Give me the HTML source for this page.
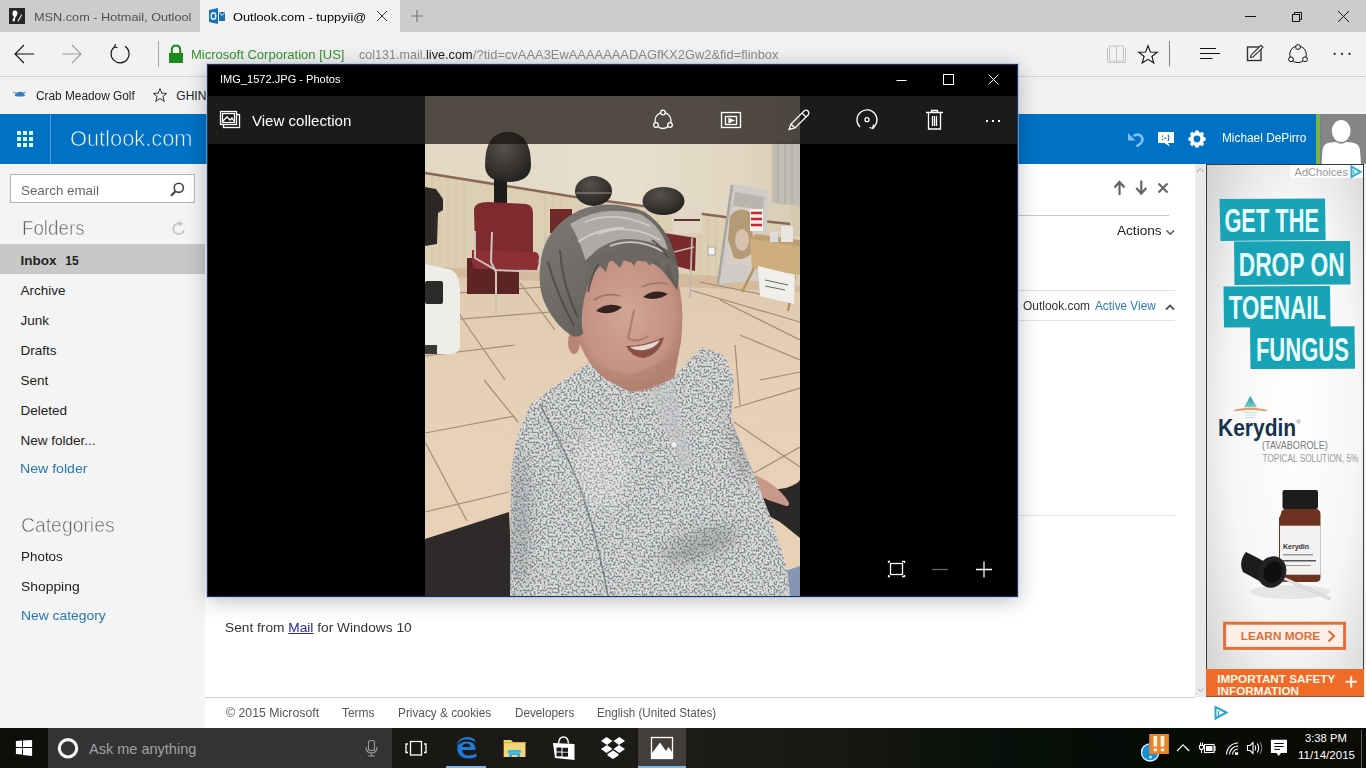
<!DOCTYPE html>
<html><head><meta charset="utf-8">
<style>
*{margin:0;padding:0;box-sizing:border-box}
html,body{width:1366px;height:768px;overflow:hidden;background:#f2f2f2;font-family:"Liberation Sans",sans-serif}
.a{position:absolute}
.t{position:absolute;white-space:nowrap;line-height:1}
svg{position:absolute;overflow:visible}
</style></head>
<body>
<div class="a" style="left:0px;top:0px;width:1366px;height:32px;background:#cccccc;"></div>
<div class="a" style="left:200px;top:0px;width:200px;height:32px;background:#f2f2f2;"></div>
<div class="t" id="t1" style="left:33.80px;top:11.77px;font-size:11.5px;color:#505050;font-weight:400;transform:scaleX(1.1044);transform-origin:0 0;">MSN.com - Hotmail, Outlool</div>
<div class="t" id="t2" style="left:233.00px;top:11.77px;font-size:11.5px;color:#000;font-weight:400;transform:scaleX(1.1136);transform-origin:0 0;">Outlook.com - tuppyii@</div>
<svg style="left:0;top:0" width="1366" height="768" viewBox="0 0 1366 768">
 <defs><linearGradient id="fade" x1="0" x2="1"><stop offset="0" stop-color="#cccccc" stop-opacity="0"/><stop offset="1" stop-color="#cccccc"/></linearGradient></defs>
 
 <!-- msn icon -->
 <rect x="9" y="8" width="16" height="16" fill="#262626"/>
 <path d="M14,10.5 Q17.5,10 17.5,13.5 Q17,16 15.5,17 L14.5,21.5 Q12.5,22 12.5,20 L14,17 Q12,15 12.5,12.5 Q13,10.7 14,10.5 Z" fill="#fff"/>
 <path d="M17.5,21 L21.5,14 L22,15 L18.5,21.5 Z" fill="#fff"/>
 <!-- outlook icon -->
 <path d="M209,10 L218,8 L218,24 L209,22 Z" fill="#1a6fb5"/>
 <ellipse cx="213.5" cy="16" rx="2.3" ry="3.2" fill="none" stroke="#e8f4ff" stroke-width="1.4"/>
 <rect x="219" y="12" width="6" height="9" fill="#1a6fb5"/>
 <path d="M219.5,12.5 L222,15.5 L225,12.5" stroke="#e8f4ff" stroke-width="1" fill="none"/>
 <!-- close tab -->
 <path d="M377,11 L387,21 M387,11 L377,21" stroke="#333" stroke-width="1"/>
 <!-- new tab plus -->
 <path d="M411,16 L423,16 M417,10 L417,22" stroke="#777" stroke-width="1.2"/>
 <!-- window controls -->
 <g stroke="#111" stroke-width="1" fill="none">
  <path d="M1245,16.5 L1256,16.5"/>
  <rect x="1292.5" y="14.5" width="7" height="7"/>
  <path d="M1294.5,14.5 L1294.5,12.5 L1301.5,12.5 L1301.5,19.5 L1299.5,19.5"/>
  <path d="M1338,11 L1349,22 M1349,11 L1338,22"/>
 </g>
</svg>
<div class="a" style="left:0px;top:32px;width:1366px;height:44px;background:#f2f2f2;"></div>
<div class="a" style="left:0px;top:76px;width:1366px;height:1px;background:#d2d2d2;"></div>
<div class="t" id="t3" style="left:191.00px;top:48.40px;font-size:13px;color:#359235;font-weight:400;transform:scaleX(1.0021);transform-origin:0 0;">Microsoft Corporation [US]</div>
<div class="t" id="t4" style="left:359.20px;top:47.60px;font-size:13px;color:#8c8c8c;font-weight:400;transform:scaleX(0.9658);transform-origin:0 0;">col131.mail.</div>
<div class="t" id="t5" style="left:426.40px;top:47.60px;font-size:13px;color:#1a1a1a;font-weight:400;transform:scaleX(0.9751);transform-origin:0 0;">live.com</div>
<div class="t" id="t6" style="left:473.00px;top:47.60px;font-size:13px;color:#8c8c8c;font-weight:400;transform:scaleX(0.9924);transform-origin:0 0;">/?tid=cvAAA3EwAAAAAAADAGfKX2Gw2&amp;fid=flinbox</div>
<svg style="left:0;top:0" width="1366" height="768" viewBox="0 0 1366 768">
 <g fill="none" stroke-width="1.1">
  <path d="M15,54 L34,54 M24,45 L15,54 L24,63" stroke="#111"/>
  <path d="M62,54 L81,54 M72,45 L81,54 L72,63" stroke="#9a9a9a"/>
  <path d="M114.5,46.8 A9,9 0 1 0 125,46.3" stroke="#111"/>
  <path d="M115.5,44 L114.5,46.8 L117.5,47.8" stroke="#111"/>
  <path d="M158.5,41 L158.5,67" stroke="#a8a8a8"/>
  <path d="M1169.5,41 L1169.5,66.5" stroke="#888"/>
 </g>
 <!-- lock -->
 <rect x="169" y="53" width="14" height="10" fill="#1d8a1d"/>
 <path d="M171.8,53 L171.8,50 Q171.8,45.5 176,45.5 Q180.2,45.5 180.2,50 L180.2,53" stroke="#1d8a1d" stroke-width="2" fill="none"/>
 <!-- book -->
 <g stroke="#c6c6c6" stroke-width="1" fill="none">
  <path d="M1107.5,48 L1107.5,62.5 L1125.5,62.5 L1125.5,48 M1109.5,46 L1109.5,61 L1116.5,61 L1116.5,46 Z M1116.5,46 L1123.5,46 L1123.5,61 L1116.5,61 M1116.5,46 L1116.5,62.5"/>
 </g>
 <!-- star -->
 <path d="M1148,45.8 L1150.4,52 L1157.2,52.3 L1151.9,56.5 L1153.8,63 L1148,59.3 L1142.2,63 L1144.1,56.5 L1138.8,52.3 L1145.6,52 Z" fill="none" stroke="#111" stroke-width="1.1" stroke-linejoin="miter"/>
 <!-- hub -->
 <path d="M1200,48.5 L1216,48.5 M1200,53.5 L1220,53.5 M1200,58.5 L1212.5,58.5" stroke="#111" stroke-width="1"/>
 <!-- note -->
 <rect x="1247.5" y="47" width="13.5" height="13.5" fill="none" stroke="#333" stroke-width="1.4"/>
 <path d="M1250.5,57.5 L1251,55 L1261,45.3 L1263,47.3 L1253,57 Z" fill="#f2f2f2" stroke="#333" stroke-width="1.1"/>
 <!-- share -->
 <g stroke="#111" stroke-width="1" fill="#f2f2f2">
  <circle cx="1298" cy="54.3" r="8.3" fill="none"/>
  <circle cx="1298" cy="47" r="2.4"/>
  <circle cx="1291" cy="59.3" r="2.4"/>
  <circle cx="1305" cy="59.3" r="2.4"/>
 </g>
 <g fill="#111">
  <circle cx="1334.6" cy="53.8" r="1.1"/><circle cx="1342" cy="53.8" r="1.1"/><circle cx="1349.5" cy="53.8" r="1.1"/>
 </g>
 <!-- crab icon & star fav -->
 <path d="M15,94 Q19,90 24,93 L25,96 Q20,97 15,96 Z" fill="#3a7ab8"/>
 <path d="M13,92 L16,93 M26,92 L23,93" stroke="#5a9ad8" stroke-width="1"/>
 <path d="M160,88.5 L161.8,93.2 L166.8,93.4 L162.9,96.5 L164.3,101.4 L160,98.6 L155.7,101.4 L157.1,96.5 L153.2,93.4 L158.2,93.2 Z" fill="none" stroke="#333" stroke-width="1"/>
</svg>
<div class="t" id="t7" style="left:36.20px;top:89.64px;font-size:12px;color:#222;font-weight:400;transform:scaleX(0.9875);transform-origin:0 0;">Crab Meadow Golf</div>
<div class="t" id="t8" style="left:176.30px;top:89.64px;font-size:12px;color:#222;font-weight:400;transform:scaleX(1.0000);transform-origin:0 0;">GHIN</div>
<div class="a" style="left:0px;top:114px;width:1366px;height:50px;background:#0072c6;"></div>
<div class="a" style="left:50px;top:114px;width:1px;height:50px;background:#4b9ad8;"></div>
<div class="a" style="left:0px;top:164px;width:205px;height:564px;background:#f4f4f4;"></div>
<div class="a" style="left:205px;top:164px;width:990px;height:533px;background:#ffffff;"></div>
<div class="a" style="left:205px;top:697px;width:1161px;height:31px;background:#ffffff;"></div>
<div class="a" style="left:205px;top:697px;width:990px;height:1px;background:#d0d0d0;"></div>
<div class="t" id="t9" style="left:69.50px;top:128.18px;font-size:22px;color:#ffffff;font-weight:400;transform:scaleX(0.9919);transform-origin:0 0;-webkit-text-stroke:0.7px #0072c6;">Outlook.com</div>
<div class="t" id="t10" style="left:1221.50px;top:131.74px;font-size:12px;color:#ffffff;font-weight:400;transform:scaleX(0.9876);transform-origin:0 0;">Michael DePirro</div>
<div class="a" style="left:10px;top:174px;width:185px;height:29px;background:#ffffff;border:1px solid #b4b4b4;"></div>
<div class="t" id="t11" style="left:21.20px;top:183.57px;font-size:13.5px;color:#666666;font-weight:400;transform:scaleX(0.9899);transform-origin:0 0;">Search email</div>
<div class="t" id="t12" style="left:21.50px;top:217.23px;font-size:21px;color:#5e5e5e;font-weight:400;transform:scaleX(0.8925);transform-origin:0 0;-webkit-text-stroke:0.6px #f4f4f4;">Folders</div>
<div class="a" style="left:0px;top:244px;width:205px;height:30px;background:#c8c8c8;"></div>
<div class="t" id="t13" style="left:20.40px;top:253.57px;font-size:13.5px;color:#222;font-weight:700;transform:scaleX(1.0000);transform-origin:0 0;">Inbox</div>
<div class="t" id="t14" style="left:65.30px;top:254.84px;font-size:12px;color:#222;font-weight:700;">15</div>
<div class="t" id="t15" style="left:20.40px;top:283.57px;font-size:13.5px;color:#222;font-weight:400;">Archive</div>
<div class="t" id="t16" style="left:20.40px;top:313.57px;font-size:13.5px;color:#222;font-weight:400;">Junk</div>
<div class="t" id="t17" style="left:20.40px;top:343.57px;font-size:13.5px;color:#222;font-weight:400;">Drafts</div>
<div class="t" id="t18" style="left:20.40px;top:373.57px;font-size:13.5px;color:#222;font-weight:400;">Sent</div>
<div class="t" id="t19" style="left:20.40px;top:403.57px;font-size:13.5px;color:#222;font-weight:400;">Deleted</div>
<div class="t" id="t20" style="left:20.40px;top:433.57px;font-size:13.5px;color:#222;font-weight:400;">New folder...</div>
<div class="t" id="t21" style="left:20.40px;top:462.07px;font-size:13.5px;color:#2878b0;font-weight:400;transform:scaleX(1.0460);transform-origin:0 0;">New folder</div>
<div class="t" id="t22" style="left:21.40px;top:515.07px;font-size:20px;color:#5e5e5e;font-weight:400;transform:scaleX(0.9678);transform-origin:0 0;-webkit-text-stroke:0.6px #f4f4f4;">Categories</div>
<div class="t" id="t23" style="left:20.60px;top:550.27px;font-size:13.5px;color:#222;font-weight:400;transform:scaleX(0.9945);transform-origin:0 0;">Photos</div>
<div class="t" id="t24" style="left:20.60px;top:579.87px;font-size:13.5px;color:#222;font-weight:400;transform:scaleX(1.0269);transform-origin:0 0;">Shopping</div>
<div class="t" id="t25" style="left:20.60px;top:609.17px;font-size:13.5px;color:#2878b0;font-weight:400;transform:scaleX(1.0261);transform-origin:0 0;">New category</div>
<div class="a" style="left:1018px;top:215px;width:151px;height:1px;background:#c8c8c8;"></div>
<div class="t" id="t26" style="left:1116.80px;top:224.27px;font-size:13.5px;color:#222;font-weight:400;transform:scaleX(1.0072);transform-origin:0 0;">Actions</div>
<div class="a" style="left:1018px;top:290px;width:157px;height:1px;background:#e0e0e0;"></div>
<div class="t" id="t27" style="left:1023.00px;top:300.12px;font-size:12.5px;color:#333;font-weight:400;transform:scaleX(0.9548);transform-origin:0 0;">Outlook.com</div>
<div class="t" id="t28" style="left:1094.80px;top:300.12px;font-size:12.5px;color:#2a7ab0;font-weight:400;transform:scaleX(0.9427);transform-origin:0 0;">Active View</div>
<div class="a" style="left:1018px;top:320px;width:157px;height:1px;background:#e4e4e4;"></div>
<div class="a" style="left:1018px;top:515px;width:157px;height:1px;background:#e0e0e0;"></div>
<div class="t" id="t29" style="left:225.10px;top:620.77px;font-size:13.5px;color:#333;font-weight:400;transform:scaleX(1.0155);transform-origin:0 0;">Sent from <span style="color:#2a2a8c;text-decoration:underline">Mail</span> for Windows 10</div>
<div class="t" id="t30" style="left:225.50px;top:707.12px;font-size:12.5px;color:#555;font-weight:400;transform:scaleX(0.9834);transform-origin:0 0;">&copy; 2015 Microsoft</div>
<div class="t" id="t31" style="left:341.90px;top:707.12px;font-size:12.5px;color:#555;font-weight:400;transform:scaleX(0.9550);transform-origin:0 0;">Terms</div>
<div class="t" id="t32" style="left:398.00px;top:707.12px;font-size:12.5px;color:#555;font-weight:400;transform:scaleX(0.9447);transform-origin:0 0;">Privacy &amp; cookies</div>
<div class="t" id="t33" style="left:514.90px;top:707.12px;font-size:12.5px;color:#555;font-weight:400;transform:scaleX(0.9378);transform-origin:0 0;">Developers</div>
<div class="t" id="t34" style="left:597.40px;top:707.12px;font-size:12.5px;color:#555;font-weight:400;transform:scaleX(0.9316);transform-origin:0 0;">English (United States)</div>
<svg style="left:0;top:0" width="1366" height="768" viewBox="0 0 1366 768">
 <g fill="#d6fbff">
  <rect x="17" y="131" width="4" height="4"/><rect x="23" y="131" width="4" height="4"/><rect x="29" y="131" width="4" height="4"/>
  <rect x="17" y="137" width="4" height="4"/><rect x="23" y="137" width="4" height="4"/><rect x="29" y="137" width="4" height="4"/>
  <rect x="17" y="143" width="4" height="4"/><rect x="23" y="143" width="4" height="4"/><rect x="29" y="143" width="4" height="4"/>
 </g>
 <!-- undo -->
 <path d="M1133.5,136 Q1138,133 1141.5,136.5 Q1144,140 1140.5,143.5 L1136.5,146.5" stroke="#80c0f0" stroke-width="2.6" fill="none"/>
 <path d="M1128,133 L1128,140.5 L1135.5,140.5 Z" fill="#80c0f0"/>
 <!-- feedback -->
 <path d="M1158,132 L1174,132 L1174,143 L1168,143 L1170,146.8 L1164.5,143 L1158,143 Z" fill="#fff"/>
 <g fill="#0b4f8a"><rect x="1162" y="135.5" width="1.2" height="1.2"/><rect x="1162" y="139" width="1.2" height="1.2"/><rect x="1164.2" y="137.6" width="2" height="1"/></g>
 <path d="M1168,134.5 Q1170,137.5 1168,141" stroke="#0b4f8a" stroke-width="1" fill="none"/>
 <!-- gear -->
 <g transform="translate(1197,139)">
  <circle r="5.2" fill="none" stroke="#fff" stroke-width="3.6"/>
  <g fill="#fff">
   <rect x="-1.8" y="-8.6" width="3.6" height="4" rx="0.6"/>
   <rect x="-1.8" y="-8.6" width="3.6" height="4" rx="0.6" transform="rotate(45)"/>
   <rect x="-1.8" y="-8.6" width="3.6" height="4" rx="0.6" transform="rotate(90)"/>
   <rect x="-1.8" y="-8.6" width="3.6" height="4" rx="0.6" transform="rotate(135)"/>
   <rect x="-1.8" y="-8.6" width="3.6" height="4" rx="0.6" transform="rotate(180)"/>
   <rect x="-1.8" y="-8.6" width="3.6" height="4" rx="0.6" transform="rotate(225)"/>
   <rect x="-1.8" y="-8.6" width="3.6" height="4" rx="0.6" transform="rotate(270)"/>
   <rect x="-1.8" y="-8.6" width="3.6" height="4" rx="0.6" transform="rotate(315)"/>
  </g>
 </g>
 <!-- avatar -->
 <rect x="1316" y="114" width="4.5" height="50" fill="#7cb342"/>
 <rect x="1320.5" y="114" width="45.5" height="50" fill="#858585"/>
 <ellipse cx="1341.2" cy="131" rx="9.4" ry="11" fill="#fff"/>
 <path d="M1321.6,164 L1322.5,150 Q1323.5,143 1330,142.5 L1336,142 Q1341,145.5 1346,142 L1352,142.5 Q1359,143 1360,150 L1361,164 Z" fill="#fff"/>
 <!-- search magnifier -->
 <circle cx="178.8" cy="187.8" r="4.6" fill="none" stroke="#444" stroke-width="1.6"/>
 <path d="M175.5,191.2 L171,195.8" stroke="#444" stroke-width="2.2"/>
 <!-- refresh folders -->
 <path d="M179,223.5 A5.3,5.3 0 1 0 183.8,230.2" stroke="#c6c6c6" stroke-width="1.9" fill="none"/>
 <path d="M178.8,220.8 L183.2,223.8 L178.8,226.6 Z" fill="#c6c6c6"/>
 <!-- reading pane arrows -->
 <g stroke="#666" stroke-width="2.2" fill="none">
  <path d="M1119.5,195 L1119.5,182.5 M1114.5,187.5 L1119.5,182 L1124.5,187.5"/>
  <path d="M1141.3,180.5 L1141.3,193 M1136.3,188 L1141.3,193.5 L1146.3,188"/>
  <path d="M1158.5,183.5 L1167.5,192.5 M1167.5,183.5 L1158.5,192.5"/>
 </g>
 <path d="M1166.5,230.5 L1170.3,234.3 L1174,230.5" stroke="#555" stroke-width="1.5" fill="none"/>
 <path d="M1166,309.5 L1170,305.5 L1174,309.5" stroke="#555" stroke-width="1.8" fill="none"/>
 <!-- scrollbar -->
 <rect x="1195" y="164" width="11" height="533" fill="#e9e9e9"/>
 <path d="M1197,172 L1200.3,168.7 L1203.6,172" stroke="#999" stroke-width="1" fill="none"/>
 <path d="M1197.5,688.5 L1200.5,691.5 L1203.5,688.5" stroke="#aaa" stroke-width="1" fill="none"/>
 <!-- ad feedback icon footer -->
 <path d="M1215.5,707 L1226.5,712.5 L1215.5,718.5 Z" fill="none" stroke="#2aa6c8" stroke-width="2"/>
 <path d="M1218.5,711 L1218.5,716" stroke="#2aa6c8" stroke-width="1.4"/>
</svg>
<svg style="left:0;top:0" width="1366" height="768" viewBox="0 0 1366 768">
 <defs>
  <radialGradient id="adbg" cx="0.55" cy="0.5" r="0.75" fx="0.55" fy="0.45">
   <stop offset="0" stop-color="#ffffff"/><stop offset="0.55" stop-color="#f6f6f6"/><stop offset="1" stop-color="#cfcfcf"/>
  </radialGradient>
  <linearGradient id="drop" x1="0" y1="0" x2="0" y2="1"><stop offset="0" stop-color="#2e9bb0"/><stop offset="1" stop-color="#7cc8c8"/></linearGradient>
 </defs>
 <rect x="1206" y="164" width="160" height="533" fill="#f2f2f2"/>
 <rect x="1206.5" y="164.5" width="157" height="532" fill="url(#adbg)" stroke="#3a3a3a" stroke-width="1"/>
 <!-- adchoices -->
 <rect x="1290" y="165" width="73" height="13" fill="#ffffff" opacity="0.85"/>
 <text x="1294.5" y="175.6" font-family="Liberation Sans" font-size="10.7" fill="#9a9a9a" textLength="53.5" lengthAdjust="spacingAndGlyphs">AdChoices</text>
 <path d="M1351.5,166.5 L1360.5,171.8 L1351.5,177 Z" fill="none" stroke="#2ab0c8" stroke-width="2"/>
 <path d="M1353.8,170 L1353.8,174" stroke="#2ab0c8" stroke-width="1.2"/>
 <!-- teal banners -->
 <g fill="#18a3b6">
  <polygon points="1219.5,199 1325,198.5 1325.6,240 1220.5,241"/>
  <polygon points="1234,241.5 1350,241 1350.5,284.5 1234.5,285"/>
  <polygon points="1223.5,286.5 1330,286 1330.5,327 1224,327.5"/>
  <polygon points="1250,327 1354.5,326.3 1355,368.7 1250.5,369"/>
 </g>
 <g font-family="Liberation Sans" font-weight="700" font-size="33" fill="#eaffff" lengthAdjust="spacingAndGlyphs">
  <text x="1224.4" y="231.7" textLength="94.6" lengthAdjust="spacingAndGlyphs">GET THE</text>
  <text x="1238.7" y="276.1" textLength="106" lengthAdjust="spacingAndGlyphs">DROP ON</text>
  <text x="1228.7" y="319" textLength="97.3" lengthAdjust="spacingAndGlyphs">TOENAIL</text>
  <text x="1255.9" y="360.7" textLength="93.1" lengthAdjust="spacingAndGlyphs">FUNGUS</text>
 </g>
 <!-- kerydin logo -->
 <polygon points="1250.3,396 1244,407.3 1257,407.3" fill="url(#drop)"/>
 <path d="M1234,410.5 Q1250.5,406 1267,410.5 Q1250.5,408.5 1234,410.5 Z" fill="#e29a66" stroke="#e29a66" stroke-width="1"/>
 <g stroke="#c9dfe6" stroke-width="1.2"><path d="M1243.5,412.5 L1257.5,412.5 M1244.5,415 L1256.5,415 M1246,417.5 L1255,417.5"/></g>
 <text x="1218" y="436" font-family="Liberation Sans" font-weight="700" font-size="24" fill="#17324d" textLength="78.2" lengthAdjust="spacingAndGlyphs">Kerydin</text>
 <circle cx="1298.5" cy="421.5" r="1.5" fill="none" stroke="#555" stroke-width="0.6"/>
 <text x="1262" y="448.8" font-family="Liberation Sans" font-size="10.5" fill="#7a7a7a" textLength="65.8" lengthAdjust="spacingAndGlyphs">(TAVABOROLE)</text>
 <text x="1262.5" y="462.3" font-family="Liberation Sans" font-size="10.5" fill="#9a9a9a" textLength="95.8" lengthAdjust="spacingAndGlyphs">TOPICAL SOLUTION, 5%</text>
 <!-- bottle -->
 <ellipse cx="1290" cy="592" rx="40" ry="7" fill="#d8d8d8" opacity="0.6"/>
 <path d="M1281,514 Q1281,508.5 1288,508.5 L1313,508.5 Q1320.5,508.5 1320.5,514 L1320.5,578 Q1320.5,582 1315,582 L1286,582 Q1279,582 1279,578 L1279,518 Z" fill="#6e3220"/>
 <rect x="1280" y="525.7" width="40.5" height="49" fill="#f4f2f0"/>
 <text x="1283" y="549" font-family="Liberation Sans" font-weight="700" font-size="7" fill="#333">Kerydin</text>
 <rect x="1283" y="554" width="30" height="1.5" fill="#999"/>
 <rect x="1283" y="560" width="33" height="1.5" fill="#555"/>
 <rect x="1283" y="565" width="28" height="1" fill="#999"/>
 <rect x="1282.5" y="490" width="35.5" height="19" rx="2" fill="#1c1c1c"/>
 <!-- dropper -->
 <path d="M1280,576.5 L1329,598.5" stroke="#c9c9c9" stroke-width="3" stroke-linecap="round"/>
 <path d="M1280,576.5 L1329,598.5" stroke="#f4f4f4" stroke-width="1"/>
 <path d="M1246,552 L1256,557 L1276,568 L1270,587 L1254,578 L1243,572 Q1238,562 1246,552 Z" fill="#1c1c1c"/>
 <ellipse cx="1272" cy="572" rx="14" ry="16" fill="#222" transform="rotate(25 1272 572)"/>
 <ellipse cx="1273" cy="572" rx="9" ry="11" fill="#0f0f0f" transform="rotate(25 1273 572)"/>
 <!-- learn more -->
 <rect x="1224.6" y="623.2" width="120" height="25.2" fill="#fcefe7" stroke="#e2703c" stroke-width="3"/>
 <text x="1240.7" y="640.2" font-family="Liberation Sans" font-weight="700" font-size="11" fill="#d8703e" textLength="79.5" lengthAdjust="spacingAndGlyphs">LEARN MORE</text>
 <path d="M1328.5,631 L1334,636 L1328.5,641.5" stroke="#d8703e" stroke-width="2" fill="none"/>
 <!-- safety bar -->
 <rect x="1206" y="669" width="158" height="27.5" fill="#f06a28"/>
 <g font-family="Liberation Sans" font-weight="700" font-size="11.3" fill="#fff8ea">
  <text x="1217.3" y="682.7" textLength="118" lengthAdjust="spacingAndGlyphs">IMPORTANT SAFETY</text>
  <text x="1217.3" y="694.6" textLength="81.7" lengthAdjust="spacingAndGlyphs">INFORMATION</text>
 </g>
 <path d="M1345.5,681.8 L1357,681.8 M1351.2,676.2 L1351.2,687.4" stroke="#fff8ea" stroke-width="2"/>
</svg>
<div class="a" style="left:207px;top:64px;width:811px;height:533px;background:#000;border:1px solid #1f3360;box-shadow:0 0 0 1px rgba(150,190,235,0.55),0 3px 20px rgba(0,0,0,0.27);"></div>
<div class="t" id="t35" style="left:220.40px;top:74.29px;font-size:11px;color:#fff;font-weight:400;transform:scaleX(1.0055);transform-origin:0 0;">IMG_1572.JPG - Photos</div>
<svg style="left:0;top:0" width="1366" height="768" viewBox="0 0 1366 768">
 <g stroke="#fff" stroke-width="1" fill="none">
  <line x1="896.5" y1="80.5" x2="906.5" y2="80.5"/>
  <rect x="943.5" y="74.5" width="10" height="10"/>
  <path d="M988.5 74.5 L998.5 84.5 M998.5 74.5 L988.5 84.5"/>
 </g>
</svg>
<div class="a" style="left:208px;top:96px;width:809px;height:48px;background:#1b1b1b;"></div>
<svg style="left:0;top:0" width="1366" height="768" viewBox="0 0 1366 768">
<defs>
 <clipPath id="pc"><rect x="425" y="96" width="375" height="500"/></clipPath>
 <filter id="knit" x="0" y="0" width="100%" height="100%">
  <feTurbulence type="fractalNoise" baseFrequency="0.5" numOctaves="2" seed="7" result="n"/>
  <feColorMatrix in="n" type="matrix" values="0 0 0 0 0.25  0 0 0 0 0.27  0 0 0 0 0.28  -7 0 0 0 3.85" result="dots"/>
  <feComposite in="dots" in2="SourceGraphic" operator="in" result="d2"/>
  <feMerge><feMergeNode in="SourceGraphic"/><feMergeNode in="d2"/></feMerge>
 </filter>
 <filter id="soft"><feGaussianBlur stdDeviation="0.7"/></filter>
 <filter id="soft2" x="-50%" y="-50%" width="200%" height="200%"><feGaussianBlur stdDeviation="7"/></filter>
 <linearGradient id="wall" x1="0" y1="0" x2="1" y2="0">
  <stop offset="0" stop-color="#e3d8c4"/><stop offset="0.55" stop-color="#e7dfcc"/><stop offset="0.85" stop-color="#e0d6c1"/><stop offset="1" stop-color="#d6cbb2"/>
 </linearGradient>
 <linearGradient id="floor" x1="0" y1="0" x2="0" y2="1">
  <stop offset="0" stop-color="#dfcab0"/><stop offset="0.4" stop-color="#e6d0b7"/><stop offset="1" stop-color="#e9d1b6"/>
 </linearGradient>
 <radialGradient id="face" cx="0.5" cy="0.45" r="0.6">
  <stop offset="0" stop-color="#d2a594"/><stop offset="0.7" stop-color="#c39282"/><stop offset="1" stop-color="#a97565"/>
 </radialGradient>
 <radialGradient id="dome" cx="0.4" cy="0.3" r="0.7">
  <stop offset="0" stop-color="#56524e"/><stop offset="1" stop-color="#262422"/>
 </radialGradient>
 <linearGradient id="hairg" x1="0" y1="0" x2="1" y2="1">
  <stop offset="0" stop-color="#7e7b77"/><stop offset="0.5" stop-color="#6c6965"/><stop offset="1" stop-color="#54514d"/>
 </linearGradient>
</defs>
<g clip-path="url(#pc)">
 <rect x="425" y="96" width="375" height="500" fill="url(#wall)"/>
 <!-- wainscot -->
 <polygon points="425,174 572,197 725,218 800,226 800,286 708,275 600,271 425,267" fill="#ddcfb3"/>
 <g stroke="#cbbb9c" stroke-width="0.8" opacity="0.7">
  <path d="M432,176 L432,266 M440,177 L440,266 M448,178 L448,266 M456,180 L456,266 M464,181 L464,267 M545,194 L545,269 M553,195 L553,270 M561,196 L561,270 M700,214 L700,274 M708,215 L708,275 M716,216 L716,275"/>
 </g>
 <polyline points="425,173 572,196.5 725,217 800,225" stroke="#8a6858" stroke-width="2.6" fill="none"/>
 <!-- floor -->
 <polygon points="425,267 600,271 708,275 800,286 800,596 425,596" fill="url(#floor)"/>
 <polygon points="425,267 600,271 708,275 800,286 800,292 425,276" fill="#cdb493" opacity="0.7"/>
 <g stroke="#8f7d68" stroke-width="1.2" fill="none" opacity="0.8">
  <path d="M425,295 L560,286 M425,322 L575,310 M425,356 L515,345 M425,433 L515,416 M425,512 L509,492"/>
  <path d="M440,284 L470,330 L505,380 M484,380 L518,422 M425,442 L467,521 M520,283 L555,330"/>
  <path d="M700,282 L790,300 M690,290 L800,322 M734,408 L800,388 M734,422 L800,467 M754,473 L800,447 M720,300 L800,340 M740,335 L800,360"/>
  <path d="M760,380 L800,372 M740,405 L735,345"/>
 </g>
 <!-- blinds top right -->
 <polygon points="772,144 800,140 800,206 772,203" fill="#c2bdb2"/>
 <g stroke="#a8a397" stroke-width="0.8"><path d="M778,143 L778,203 M785,142 L785,204 M792,141 L792,205"/></g>
 <rect x="790" y="206" width="10" height="30" fill="#d5cab0"/>
 <!-- left white object -->
 <path d="M425,264 L452,270 Q460,276 460,290 L460,346 Q459,354 450,354 L425,354 Z" fill="#eeedea"/>
 <rect x="425" y="281" width="18" height="23" rx="2" fill="#2c2a28"/>
 <rect x="425" y="345" width="12" height="9" fill="#3a3836"/>
 <path d="M425,187 L436,189 L443,199 L443,210 L438,213 L437,244 L425,246 Z" fill="#2b2826"/>
 <!-- hair dryer 1 -->
 <rect x="494" y="178" width="13" height="25" fill="#1f1d1c"/>
 <path d="M485,165 Q485,132 508,132 Q531,132 531,165 Q531,182 508,182 Q485,182 485,165 Z" fill="url(#dome)"/>
 <!-- red chair -->
 <rect x="467" y="258" width="52" height="36" fill="#5c2422"/>
 <path d="M474,209 Q475,202 488,202 L526,204 Q533,205 533,213 L533,255 L475,255 Z" fill="#7e2a2f"/>
 <path d="M472,250 L536,252 Q540,254 539,262 L537,270 L476,269 Q471,266 472,258 Z" fill="#8c3035"/>
 <g stroke="#cbc5be" stroke-width="2" fill="none">
  <path d="M475,231 L475,258 L496,270 L540,272"/>
  <path d="M492,232 L491,262 L496,272 L496,314"/>
  <path d="M541,266 L544,300 M539,262 L548,236"/>
 </g>
 <!-- chair 2 & dryer 2 -->
 <rect x="550" y="209" width="22" height="24" fill="#6d2a29"/>
 <ellipse cx="593.5" cy="191" rx="18.5" ry="15" fill="url(#dome)"/>
 <path d="M576,193 L611,193" stroke="#9a9590" stroke-width="1"/>
 <!-- dryer 3 + basket + chair -->
 <polygon points="671,207 702,206 701,233 673,234" fill="#e2d6c4"/>
 <path d="M674,220 L700,220" stroke="#5a3a2a" stroke-width="2"/>
 <ellipse cx="663.5" cy="201" rx="21" ry="14" fill="url(#dome)"/>
 <path d="M658,232 L696,238 L695,271 L660,262 Z" fill="#7a2a2b"/>
 <path d="M674,252 L694,247 M692,238 L690,298 M670,262 L680,306" stroke="#c0b8b0" stroke-width="1.8" fill="none"/>
 
 <!-- poster stand -->
 <polygon points="732,184 768,190 766,280 718,284" fill="#cfcbc7"/>
 <polygon points="735,192 764,197 763,210 733,206" fill="#b9b4ae"/>
 <polygon points="733,206 763,210 761,266 726,264" fill="#d8cdc4"/>
 <path d="M730,216 Q740,204 752,214 L753,252 Q744,262 734,258 L728,240 Z" fill="#b59a78"/>
 <ellipse cx="742" cy="240" rx="7" ry="11" fill="#d9bfae"/>
 <rect x="750" y="209" width="13" height="22" fill="#f2f0ec"/>
 <path d="M751,213 L762,213 M751,219 L762,219 M751,225 L762,225" stroke="#c8262a" stroke-width="2.6"/>
 <path d="M718,284 L732,185" stroke="#a9a49e" stroke-width="2.5"/>
 <rect x="708" y="247" width="7" height="8" fill="#f4f2ee" stroke="#888" stroke-width="0.6"/>
 <!-- desk -->
 <polygon points="750,239 800,247 800,275 752,268" fill="#cfae7d"/>
 <polygon points="750,239 800,247 800,240 756,234" fill="#bfa070"/>
 <path d="M754,268 L742,292 M795,275 L788,311" stroke="#b7935e" stroke-width="2.5"/>
 <polygon points="758,266 795,275 794,304 760,296" fill="#f0efec"/>
 <path d="M765,280 L788,285 M765,286 L785,290" stroke="#666" stroke-width="1"/>
 <rect x="781" y="226" width="12" height="16" fill="#e8e6e2"/>
 <rect x="770" y="232" width="8" height="10" fill="#ddd"/>
 <!-- dark chair bottom-left -->
 <polygon points="425,539 509,512 513,596 425,596" fill="#2d2a29"/>
 <!-- chair arm right -->
 <path d="M751,493 L786,488 Q798,484 800,480 L800,538 Q790,530 780,522 L752,507 Z" fill="#2a2928"/>
 <path d="M745,472 Q770,478 786,498 Q792,506 786,506 L768,500 L748,490 Z" fill="#c8988a"/>
 <polygon points="785,571 800,566 800,596 783,596" fill="#8596b4"/>
 <!-- neck -->
 <path d="M592,350 L596,366 Q614,386 631,393 Q656,389 674,380 L679,352 L679,335 L598,335 Z" fill="#b48272"/>
 <!-- sweater -->
 <clipPath id="swc"><path d="M510,596 L511,473 L516,440 L530,405 L552,388 L590,362 Q610,385 631,392 Q655,388 672,379 L702,347 L725,356 L734,379 L731,420 L754,474 L772,521 L787,568 L790,596 Z"/></clipPath>
 <path d="M510,596 L511,473 L516,440 L530,405 L552,388 L590,362 Q610,385 631,392 Q655,388 672,379 L702,347 L725,356 L734,379 L731,420 L754,474 L772,521 L787,568 L790,596 Z" fill="#dcdddd" filter="url(#knit)"/>
 <g clip-path="url(#swc)" filter="url(#soft2)">
  <ellipse cx="700" cy="545" rx="40" ry="14" fill="#6a6d70" opacity="0.35" transform="rotate(-20 700 545)"/>
  <ellipse cx="520" cy="520" rx="10" ry="70" fill="#6a6d70" opacity="0.3"/>
  <ellipse cx="745" cy="430" rx="14" ry="50" fill="#6a6d70" opacity="0.25"/>
  <ellipse cx="600" cy="470" rx="30" ry="40" fill="#ffffff" opacity="0.2"/>
 </g>
 <path d="M648,392 L672,380 L694,462 L682,470 Z" fill="#c4c6c7" opacity="0.5"/>
 <circle cx="674" cy="444.7" r="3.2" fill="#f2f1ea" stroke="#999" stroke-width="0.6"/>
 <path d="M540,405 Q560,440 578,482 Q596,530 608,596" stroke="#55595c" stroke-width="1.6" fill="none" opacity="0.55"/>
 <!-- face -->
 <path d="M574,266 Q596,250 630,253 Q664,254 677,278 Q684,302 682,330 Q681,356 671,371 Q656,388 640,390 Q614,388 598,373 Q582,356 577,334 Z" fill="url(#face)"/>
 <path d="M600,366 Q620,392 642,392 Q662,388 674,370 L676,350 Q650,372 630,374 Q610,372 600,366 Z" fill="#b38272" opacity="0.6"/>
 <!-- ear -->
 <ellipse cx="574" cy="342" rx="6" ry="12" fill="#b98676"/>
 <!-- hair -->
 <path d="M540,268 Q542,228 580,210 Q612,198 645,212 Q668,228 675,255 Q681,272 677,290 Q668,276 660,268 Q646,258 630,262 Q612,256 598,268 Q588,280 584,300 Q580,318 583,334 Q578,338 572,336 Q556,326 546,306 Q538,290 540,268 Z" fill="url(#hairg)"/>
 <path d="M570,224 Q600,204 640,214 Q662,226 668,250 Q642,236 618,240 Q596,246 586,262 Q580,240 570,224 Z" fill="#aeaaa5"/>
 <g stroke="#d4d1cc" stroke-width="1.8" fill="none" opacity="0.9">
  <path d="M585,222 Q615,210 650,226"/><path d="M598,234 Q628,222 660,240"/><path d="M578,242 Q598,228 624,228"/><path d="M610,246 Q636,236 664,252"/>
 </g>
 <g stroke="#4a4744" stroke-width="2" fill="none" opacity="0.8">
  <path d="M548,262 Q556,292 574,326"/><path d="M560,250 Q562,285 578,318"/><path d="M652,240 Q670,252 675,280"/><path d="M602,258 Q592,272 588,292"/>
 </g>
  <path d="M584,262 L592,276 L596,262 L606,272 L610,258 L620,268 L626,256 L634,266 L640,255 L650,266 L654,256 L664,272 L668,262 L676,286 L678,266 L660,252 L620,250 L590,256 Z" fill="#6c6965"/>
 <!-- eyes / brows -->
 <path d="M596,311 Q607,301 622,307 Q611,317 596,311 Z" fill="#33221f"/>
 <path d="M643,297 Q655,288 668,294 Q656,302 643,297 Z" fill="#33221f"/>
 <path d="M594,300 Q606,292 620,296" stroke="#9a7668" stroke-width="1.6" fill="none"/>
 <path d="M642,287 Q654,281 668,284" stroke="#9a7668" stroke-width="1.6" fill="none"/>
 <!-- nose shadow -->
 <path d="M634,310 Q630,330 628,338 Q636,344 648,336" stroke="#a06e5e" stroke-width="2" fill="none" opacity="0.7"/>
 <!-- mouth -->
 <path d="M626,346 Q645,346 664,337 Q660,354 644,358 Q632,358 626,346 Z" fill="#8a5048"/>
 <path d="M630,347 Q646,346 660,340 Q656,348 644,350 Q635,351 630,347 Z" fill="#e6d8cc"/>
</g>
<rect x="425" y="96" width="375" height="48" fill="#1a1512" opacity="0.73"/>
</svg>
<div class="t" id="t36" style="left:252.00px;top:113.10px;font-size:15px;color:#fff;font-weight:400;transform:scaleX(1.0035);transform-origin:0 0;">View collection</div>
<svg style="left:0;top:0" width="1366" height="768" viewBox="0 0 1366 768">
 <g stroke="#fff" stroke-width="1.3" fill="none">
  <rect x="223.5" y="114.5" width="16" height="13" fill="#1b1b1b"/>
  <rect x="220.5" y="111.5" width="16" height="13" fill="#1b1b1b"/>
  <rect x="222.5" y="113.5" width="12" height="9"/>
  <path d="M223,121 L227,117 L230,120 L232,118 L234,121"/>
  <!-- share -->
  <circle cx="663" cy="120.5" r="8"/>
  <circle cx="663" cy="112.5" r="2.3" fill="#4f4842"/>
  <circle cx="656" cy="125" r="2.3" fill="#4f4842"/>
  <circle cx="670" cy="125" r="2.3" fill="#4f4842"/>
  <!-- slideshow -->
  <rect x="721.5" y="112.5" width="19" height="15"/>
  <rect x="725.5" y="116.5" width="11" height="8"/>
  <path d="M729,118.5 L733.5,120.5 L729,122.5 Z" fill="#fff"/>
  <!-- pencil -->
  <path d="M789,129.5 L791,124 L804.5,110.5 Q806.5,109.5 808,111 Q809.5,112.5 808.5,114.5 L795,128 Z M791,124 L795,128 M802,113 L806,117"/>
  <!-- rotate -->
  <path d="M860,127 A10,10 0 1 1 872,128.5"/>
  <circle cx="867" cy="119.7" r="2"/>
  <path d="M869.5,127.5 L873,128.5 L873.5,124.5"/>
  <!-- trash -->
  <path d="M926,112.5 L943,112.5 M928.5,112.5 L928.5,129 L940.5,129 L940.5,112.5 M931.5,112.5 L931.5,110.5 L937.5,110.5 L937.5,112.5 M932.5,116 L932.5,126 M934.5,116 L934.5,126 M936.5,116 L936.5,126"/>
 </g>
 <g fill="#fff">
  <rect x="986" y="120" width="2" height="2"/><rect x="992" y="120" width="2" height="2"/><rect x="998" y="120" width="2" height="2"/>
 </g>
 <g stroke="#fff" stroke-width="1.3" fill="none">
  <!-- fit -->
  <rect x="890.5" y="563.5" width="12" height="11"/>
  <path d="M888.5,563 L888.5,561.5 L890,561.5 M902,561.5 L904.5,561.5 L904.5,563 M904.5,575 L904.5,576.5 L902,576.5 M890,576.5 L888.5,576.5 L888.5,575"/>
  <path d="M932,569.5 L948,569.5" stroke="#666"/>
  <path d="M976,569.5 L992,569.5 M984,561.5 L984,577.5"/>
 </g>
</svg>
<svg style="left:0;top:0" width="1366" height="768" viewBox="0 0 1366 768">
 <defs>
  <linearGradient id="tb" x1="0" x2="1">
   <stop offset="0" stop-color="#13110e"/><stop offset="0.3" stop-color="#1a1815"/><stop offset="0.5" stop-color="#1e1c18"/><stop offset="0.62" stop-color="#181712"/><stop offset="0.73" stop-color="#07100a"/><stop offset="0.85" stop-color="#060b06"/><stop offset="1" stop-color="#0c0b08"/>
  </linearGradient>
 </defs>
 <rect x="0" y="728" width="1366" height="40" fill="url(#tb)"/>
 <rect x="0" y="728" width="48" height="40" fill="#100e0b"/>
 <rect x="48" y="728" width="344" height="40" fill="#333333"/>
 <!-- windows logo -->
 <g fill="#fff">
  <polygon points="15.9,741.1 22,740.6 22,747.1 15.9,747.1"/>
  <polygon points="22.9,740.4 32.1,739.9 32.1,747.1 22.9,747.1"/>
  <polygon points="15.9,747.9 22,747.9 22,754.6 15.9,754.1"/>
  <polygon points="22.9,747.9 32.1,747.9 32.1,756 22.9,755.1"/>
 </g>
 <!-- cortana -->
 <circle cx="68" cy="748.3" r="8.7" fill="none" stroke="#f4f4f4" stroke-width="3.2"/>
 <!-- mic -->
 <g stroke="#9a9a9a" stroke-width="1.1" fill="none">
  <rect x="368.5" y="740.5" width="6" height="10" rx="2"/>
  <path d="M366,747 Q366,753 371.5,753 Q377,753 377,747 M371.5,753 L371.5,756 M368,756 L375,756"/>
 </g>
 <!-- task view -->
 <g stroke="#fff" stroke-width="1.3" fill="none">
  <rect x="410.5" y="741.5" width="11" height="13.5"/>
  <path d="M408,744 L406,744 L406,752.5 L408,752.5 M424,744 L426,744 L426,752.5 L424,752.5"/>
 </g>
 <!-- edge -->
 <path d="M475.5,750 L462,750 Q462.5,755.5 469,755.5 Q473,755.5 476.5,753.5 L476.5,757 Q472.5,758.5 468,758.5 Q458,758.3 457.3,749 Q456.5,741 464,739.5 Q459,741 458,745.5 Q461,741.5 467.5,741.5 Q476,741.8 475.5,750 Z M462.2,747 L470.5,747 Q470.3,743.5 466.5,743.5 Q462.8,743.5 462.2,747 Z" fill="#1f7ad8"/>
 <path d="M456,745 Q459,737.5 467,737 Q474,737 476,742 Q470,738.5 464,739.5 Q458.5,740.5 456,745 Z" fill="#1f7ad8"/>
 <rect x="446" y="766" width="40" height="2" fill="#76b9ed"/>
 <!-- folder -->
 <path d="M503.7,740 L511,740 L513,742 L525.5,742 L525.5,757 L503.7,757 Z" fill="#f3d57a"/>
 <rect x="503.7" y="742" width="21.8" height="1.2" fill="#d6b24a"/>
 <path d="M509,757 L509,752.5 L520,752.5 L520,757 L517,757 L517,755 L512,755 L512,757 Z" fill="#36b0e6"/>
 <path d="M507,752.5 L522,752.5 L520,750 L509,750 Z" fill="#36b0e6"/>
 <!-- store -->
 <path d="M553,743 L574.5,744 L574.5,760 L555,758 Z" fill="#fff"/>
 <path d="M558.5,743.5 Q559,737 563.5,737 Q568,737 568.5,743.5" stroke="#fff" stroke-width="1.4" fill="none"/>
 <g fill="#1a1815">
  <rect x="556.5" y="747.5" width="5" height="4"/><rect x="562.5" y="747.8" width="5.5" height="4"/>
  <rect x="556.5" y="752.5" width="5" height="3.8"/><rect x="562.5" y="752.6" width="5.5" height="4"/>
 </g>
 <!-- dropbox -->
 <g fill="#fff">
  <polygon points="606.5,737 612.5,741 607,745 601,741"/>
  <polygon points="619.5,737 625,741 619,745 613.5,741"/>
  <polygon points="601,749 607,745 612.5,749 606.5,753"/>
  <polygon points="625,749 619,745 613.5,749 619.5,753"/>
  <polygon points="613,750.5 618.5,754 618.5,755.5 613,759 607.5,755.5 607.5,754"/>
 </g>
 <!-- photos active -->
 <rect x="638" y="728" width="48" height="40" fill="#423f3b"/>
 <rect x="651.5" y="737.5" width="21" height="21" fill="none" stroke="#fff" stroke-width="1.3"/>
 <path d="M652,758 L652,753 L660,742.5 L666,751 L668.5,747 L672,752 L672,758 Z" fill="#fff"/>
 <rect x="638" y="766" width="48" height="2" fill="#76b9ed"/>
 <!-- tray: blue app + badge -->
 <circle cx="1150.1" cy="752.4" r="8.6" fill="#1c8fd2" stroke="#e8f4fa" stroke-width="1.3"/>
 <circle cx="1150.5" cy="757" r="1.6" fill="#a8e0ff"/>
 <rect x="1149.2" y="734" width="19.7" height="20" fill="#e6842f"/>
 <g fill="#fff3d8">
  <rect x="1153.5" y="736" width="3.7" height="10.5"/><rect x="1160.6" y="736" width="3.7" height="10.5"/>
  <rect x="1153.8" y="748.5" width="3.2" height="2.8"/><rect x="1160.9" y="748.5" width="3.2" height="2.8"/>
 </g>
 <path d="M1177,751 L1183,744.8 L1189.2,751" stroke="#fff" stroke-width="1.1" fill="none"/>
 <!-- battery plug -->
 <g stroke="#fff" stroke-width="1.1" fill="none">
  <rect x="1204.5" y="744.5" width="9.5" height="8"/>
  <path d="M1214,746.5 L1215,746.5 L1215,750.5 L1214,750.5"/>
  <path d="M1199.5,745.5 L1203.5,745.5 L1203.5,747.5 Q1203.5,749.5 1201.5,749.5 Q1199.5,749.5 1199.5,747.5 Z M1200.5,745.5 L1200.5,742.5 M1202.5,745.5 L1202.5,742.5 M1201.5,749.5 L1201.5,753"/>
 </g>
 <rect x="1206" y="746" width="6.5" height="5" fill="#fff"/>
 <!-- wifi -->
 <g stroke="#fff" stroke-width="1.1" fill="none">
  <path d="M1226.6,754.5 A11.5,11.5 0 0 1 1238.1,743"/>
  <path d="M1229.6,754.5 A8.5,8.5 0 0 1 1238.1,746"/>
  <path d="M1232.6,754.5 A5.5,5.5 0 0 1 1238.1,749"/>
 </g>
 <rect x="1235" y="752.3" width="3.1" height="2.6" fill="#fff"/>
 <!-- volume -->
 <g stroke="#fff" stroke-width="1.1" fill="none">
  <path d="M1247.5,745.5 L1250,745.5 L1253,742.5 L1253,753.5 L1250,750.5 L1247.5,750.5 Z"/>
  <path d="M1255,745.5 Q1256.5,748 1255,750.5"/>
  <path d="M1257.3,743.5 Q1260,748 1257.3,752.5"/>
 </g>
 <path d="M1260,742 Q1263.5,748 1260,754" stroke="#888" stroke-width="1" fill="none"/>
 <!-- action center -->
 <path d="M1270.9,739.8 L1287,739.8 L1287,753.1 L1281,753.1 L1278.7,756 L1276.4,753.1 L1270.9,753.1 Z" fill="#fff"/>
 <g stroke="#0c0b08" stroke-width="1"><path d="M1274.3,743.5 L1283.7,743.5 M1274.3,746.5 L1283.7,746.5 M1274.3,749.4 L1280,749.4"/></g>
 <!-- show desktop -->
 <rect x="1361" y="730" width="1" height="38" fill="#5a5a5a"/>
</svg>
<div class="t" id="t37" style="left:88.75px;top:741.30px;font-size:15px;color:#a0a0a0;font-weight:400;transform:scaleX(0.9676);transform-origin:0 0;">Ask me anything</div>
<div class="t" id="t38" style="left:1305.00px;top:733.07px;font-size:11.5px;color:#fff;font-weight:400;transform:scaleX(0.9760);transform-origin:0 0;">3:38 PM</div>
<div class="t" id="t39" style="left:1297.50px;top:749.77px;font-size:11.5px;color:#fff;font-weight:400;transform:scaleX(1.0052);transform-origin:0 0;">11/14/2015</div>
</body></html>
